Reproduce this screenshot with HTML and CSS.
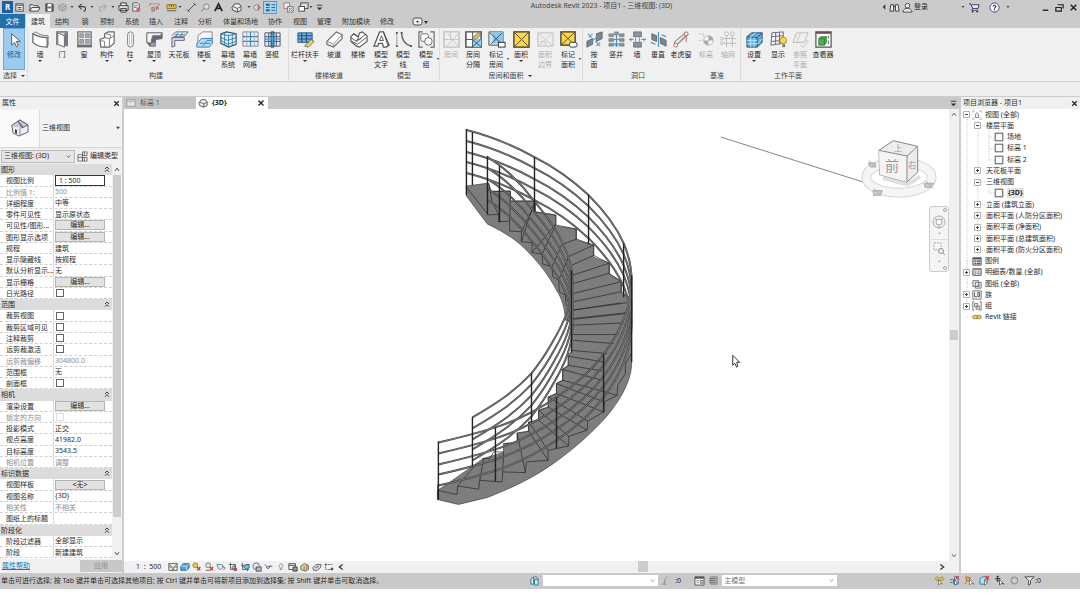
FILE: index.html
```html
<!DOCTYPE html>
<html lang="zh-CN">
<head>
<meta charset="utf-8">
<title>Autodesk Revit 2023 - 项目1 - 三维视图: (3D)</title>
<link rel="stylesheet" href="styles.css">
</head>
<body>
<svg class="defs" aria-hidden="true">
  <defs>
    <!-- ribbon icons, 20 x 20 -->
    <symbol id="r-arrow" viewBox="0 0 20 20"><path d="M7 4v12l3-3 2 4.500 2-1-2-4.500h4z" fill="#fff" stroke="#555"/></symbol>
    <symbol id="r-wall" viewBox="0 0 20 20"><path d="M2 4c5 3 9 4 15 4v10C10 18 6 17 2 13z" fill="#fff" stroke="#666" stroke-width="1.300"/><path d="M2 4l3-2c4 3 7 4 13 4v10l-1 2" fill="none" stroke="#777"/></symbol>
    <symbol id="r-door" viewBox="0 0 20 20"><path d="M4 16V2h11v15" fill="#ddd" stroke="#666" stroke-width="1.200"/><path d="M12 3h3v14h-3z" fill="#778"/><path d="M5 3l7 3v12l-7-3z" fill="#fafafa" stroke="#666"/></symbol>
    <symbol id="r-window" viewBox="0 0 20 20"><path d="M3 2h14v14H3z" fill="#eee" stroke="#777" stroke-width="1.500"/><path d="M5 4h4v4H5zM11 4h4v4h-4zM5 10h4v4H5zM11 10h4v4h-4z" fill="#a4acb6" stroke="#777" stroke-width=".7"/><path d="M2 17.500h16" stroke="#666" stroke-width="1.500"/></symbol>
    <symbol id="r-comp" viewBox="0 0 20 20"><path d="M2 10l5-2V4l4-2h6v12l-5 4H3z" fill="#fff" stroke="#666" stroke-width="1.200"/><path d="M7 8l5 1 5-3M12 9v9M2 11l5 1v6M8 4l5 1v4" fill="none" stroke="#777"/></symbol>
    <symbol id="r-col" viewBox="0 0 20 20"><rect x="7" y="2" width="6" height="16" rx="3" fill="#fff" stroke="#777"/><path d="M9 4v12M11 4v12" stroke="#aaa" stroke-width=".7"/></symbol>
    <symbol id="r-roof" viewBox="0 0 20 20"><path d="M2 3h16v6l-7 1v7H5l-3-4z" fill="#667" stroke="#666"/><path d="M2 3h16l-2 3H8L6 14l-4-1z" fill="#f4f4f4" stroke="#777"/><path d="M6 14l5-1v4H6z" fill="#99a"/></symbol>
    <symbol id="r-ceil" viewBox="0 0 20 20"><path d="M2 6l4-4h13l-4 5H4v8" fill="#e9f4fb" stroke="#666"/><path d="M5 5h11M8 3l-2 4M13 3l-2 4" stroke="#2980b9"/><path d="M2 8h13v3H5v6l-3 1z" fill="#d6dade" stroke="#667"/></symbol>
    <symbol id="r-floor" viewBox="0 0 20 20"><path d="M3 13V6l5-4h10v12" fill="#f6f6f6" stroke="#888"/><path d="M2 14l5-5h11v5l-3 4H2z" fill="#b9dcf0" stroke="#2980b9"/><path d="M5 14h5l3-3h4M8 17l3-3h5" fill="none" stroke="#2980b9"/></symbol>
    <symbol id="r-csys" viewBox="0 0 20 20"><path d="M2 4l6-2 10 2v11l-8 3-8-4z" fill="#dff0fa" stroke="#356" stroke-width="1.200"/><path d="M2 8l7 3 9-3M2 11l7 4 9-3M6 3v13M10 5v13M14 4v12M2 4l8 2 8-2" fill="none" stroke="#2478a8" stroke-width=".9"/></symbol>
    <symbol id="r-cgrid" viewBox="0 0 20 20"><path d="M2 2h16v15H2z" fill="#e8eef2" stroke="#889"/><path d="M2 7h16M2 12h16M10 2v15" stroke="#3b86b2" stroke-width="1.200"/><path d="M6 2v15M14 2v15" stroke="#9ab"/></symbol>
    <symbol id="r-mull" viewBox="0 0 20 20"><path d="M2 3h16v14H2z" fill="#e3edf3" stroke="#556"/><path d="M2 7h16M2 12h16M6 3v14M14 3v14" stroke="#457"/><path d="M8.500 2h3v16h-3z" fill="#45a1cf" stroke="#245"/><path d="M2 9.500h16" stroke="#45a1cf" stroke-width="1.500"/></symbol>
    <symbol id="r-rail" viewBox="0 0 20 20"><path d="M2 3h15v10H2z" fill="#76aed6" stroke="#245c8c"/><path d="M2 6h15M2 9.500h15M6 3v10M11 3v10" stroke="#1d5484" stroke-width="1.200"/><path d="M9 17l7-7 3 2-6 6z" fill="#f5cf62" stroke="#765"/></symbol>
    <symbol id="r-ramp" viewBox="0 0 20 20"><path d="M2 12L12 2l6 3v4l-9 9-7-3z" fill="#fff" stroke="#666" stroke-width="1.200"/><path d="M2 12l7 3 9-10M9 15v3" fill="none" stroke="#888"/></symbol>
    <symbol id="r-stair" viewBox="0 0 20 20"><path d="M2 7l3-3 5 3 1-4 3-1 5 4v6l-8 6-3-1-6-5z" fill="#fff" stroke="#555" stroke-width="1.200"/><path d="M5 4l5 4-2 3 5-2M2 8l6 4 9-7M3 12l6 3 9-7" fill="none" stroke="#555"/></symbol>
    <symbol id="r-mtext" viewBox="0 0 20 20"><path d="M2 17L8 2h4l6 14-3 2h-3l-1-4H7l-1 3z" fill="#fff" stroke="#555" stroke-width="1.300"/><path d="M8 11l2-5 2 5zM12 2l5 15" fill="none" stroke="#555"/></symbol>
    <symbol id="r-mline" viewBox="0 0 20 20"><path d="M3 3v14" stroke="#999"/><path d="M8 3c0 8 3 12 10 14" fill="none" stroke="#555" stroke-width="1.300"/><path d="M2 2h2v2H2zM2 16h2v2H2zM7 2h2v2H7zM17 16h2v2h-2z" fill="#555"/></symbol>
    <symbol id="r-mgroup" viewBox="0 0 20 20"><path d="M6 2H2v16h4M14 2h4v16h-4" fill="none" stroke="#666" stroke-width="1.200"/><rect x="4" y="4" width="8" height="8" rx="2" fill="#fff" stroke="#666"/><circle cx="12" cy="12" r="4" fill="#fff" stroke="#666"/></symbol>
    <symbol id="r-room" viewBox="0 0 20 20"><path d="M2 2h16v16H2z" fill="#eee" stroke="#666" stroke-width="1.500"/><path d="M2 10h7V2M9 10h9M5 17L17 4M6 4l12 14" stroke="#777" fill="none"/></symbol>
    <symbol id="r-rsep" viewBox="0 0 20 20"><path d="M2 2h16v16H2z" fill="#fff" stroke="#444" stroke-width="1.500"/><path d="M9 9h9v9H9z" fill="#8ed1ec"/><path d="M2 10h7V2M9 10v8M9 18l9-9M9 10l9 8" stroke="#555" fill="none"/><path d="M9 8l6-5 3 2-6 5z" fill="#e9be45" stroke="#876"/></symbol>
    <symbol id="r-rtag" viewBox="0 0 20 20"><path d="M2 2h15v14H2z" fill="#d4e5ee" stroke="#555"/><path d="M6 2h11v12H6z" fill="#8cc5e6"/><path d="M3 3l13 12M16 3L4 15" stroke="#357"/><rect x="12" y="13" width="7" height="5" fill="#fff" stroke="#333"/></symbol>
    <symbol id="r-area" viewBox="0 0 20 20"><path d="M2 2h16v16H2z" fill="#fbd54a" stroke="#333" stroke-width="1.300"/><path d="M2 2l16 16M18 2L2 18" stroke="#665022"/></symbol>
    <symbol id="r-abound" viewBox="0 0 20 20"><path d="M2 3h16v14H2z" fill="#e8e8e8" stroke="#666"/><path d="M2 3l16 14M18 3L2 17M4 12h6v5" stroke="#888" fill="none"/></symbol>
    <symbol id="r-atag" viewBox="0 0 20 20"><path d="M2 2h15v14H2z" fill="#fbd54a" stroke="#333" stroke-width="1.300"/><path d="M2 2l15 14M17 2L2 16" stroke="#665022"/><rect x="11" y="13" width="8" height="5" rx="2" fill="#fff" stroke="#333"/></symbol>
    <symbol id="r-face" viewBox="0 0 20 20"><path d="M12 4l6-2v7l-6 3z" fill="#7d8790" stroke="#666"/><path d="M2 12l6-3v6l-6 3z" fill="#7d8790" stroke="#666"/><path d="M3 4l4 4M8 4L4 8M11 12l5 5M16 13l-4 4M6 13L14 6" stroke="#5b9ec8" stroke-width="1.200"/></symbol>
    <symbol id="r-shaft" viewBox="0 0 20 20"><path d="M2 4h5v3H2zM2 9h5v3H2zM2 14h5v3H2zM13 4h5v3h-5zM13 9h5v3h-5zM13 14h5v3h-5zM8 2h4v3H8z" fill="#8c959d" stroke="#6a747c" stroke-width=".6"/><path d="M10 5v12M7 10h6M8 14l2 3 2-3" fill="none" stroke="#4493c2" stroke-width="1.300"/></symbol>
    <symbol id="r-owall" viewBox="0 0 20 20"><path d="M6 2h8v5H6zM6 13h8v5H6z" fill="#8c959d" stroke="#6a747c"/><path d="M1 10h5M14 10h5M4 8l-2 2 2 2M16 8l2 2-2 2M8 8v4M12 8v4" fill="none" stroke="#4e97bf"/></symbol>
    <symbol id="r-vert" viewBox="0 0 20 20"><path d="M3 4l5 2v6l-5-2zM12 8l6 3v6l-6-3z" fill="#7d8790" stroke="#666"/><path d="M10 2v16M2 13l5 2M13 5l5 2" stroke="#4e97bf" stroke-width="1.300"/></symbol>
    <symbol id="r-dorm" viewBox="0 0 20 20"><path d="M3 17V12L14 3l3 2L6 15z" fill="#e3e3e3" stroke="#777"/><path d="M5 16l10-11M15 5v8" stroke="#a6766a"/><circle cx="4" cy="16" r="2" fill="#fff" stroke="#a66"/><circle cx="15" cy="4" r="2" fill="#fff" stroke="#a66"/></symbol>
    <symbol id="r-level" viewBox="0 0 20 20"><circle cx="12" cy="11" r="5" fill="#fff" stroke="#555"/><path d="M12 6a5 5 0 0 1 5 5h-5zM12 16a5 5 0 0 1-5-5h5z" fill="#222"/><path d="M2 4h5v4M2 11h4" stroke="#666" fill="none" stroke-dasharray="2 1"/></symbol>
    <symbol id="r-grid" viewBox="0 0 20 20"><path d="M8 5v13M14 5v13M3 9h15M3 14h15" stroke="#555"/><circle cx="8" cy="4" r="2" fill="#fff" stroke="#555"/><circle cx="14" cy="4" r="2" fill="#fff" stroke="#555"/><circle cx="3" cy="9" r="1.500" fill="#fff" stroke="#555"/><circle cx="3" cy="14" r="1.500" fill="#fff" stroke="#555"/></symbol>
    <symbol id="r-set" viewBox="0 0 20 20"><path d="M2 7l5-4 11 0v10l-5 5H2z" fill="#5aaee0" stroke="#346"/><path d="M2 7l11 1 5-5M13 8v10" fill="none" stroke="#245c84"/><path d="M6 7v11M9.500 8v10M2 11h11M2 14.500h11l5-5M6 7l5-4" fill="none" stroke="#cdeaf9" stroke-width=".9"/></symbol>
    <symbol id="r-show" viewBox="0 0 20 20"><path d="M3 3l12-1v12L2 16z" fill="#f4f4f4" stroke="#667"/><path d="M3 7l12-1M3 12l11-1M7 3v12M11 3v12" stroke="#667"/><circle cx="15" cy="11" r="3.500" fill="#fbd54a" stroke="#b88a1c"/><path d="M14 15h3v3h-3z" fill="#777"/></symbol>
    <symbol id="r-ref" viewBox="0 0 20 20"><path d="M6 3h12l-4 10H2z" fill="#eee" stroke="#555"/><path d="M10 3L6 13M15 10l3 2-5 6-3-2" stroke="#777" fill="none"/></symbol>
    <symbol id="r-viewer" viewBox="0 0 20 20"><path d="M2 2h16v16H2z" fill="#fff" stroke="#555" stroke-width="1.300"/><path d="M2 3h16" stroke="#704a55" stroke-width="2"/><path d="M5 9l2-2h6v6l-2 3H5z" fill="#4fae53" stroke="#2c7a34" stroke-width=".8"/><path d="M5 9h6v7M11 9l2-2" fill="none" stroke="#2c7a34" stroke-width=".8"/><path d="M15 6v3M15 11v4" stroke="#456"/></symbol>

    <!-- small toolbar icons, 12 x 12 -->
    <symbol id="s-doc" viewBox="0 0 12 12"><rect x="2" y="2" width="8" height="8" fill="#eee" stroke="#444"/><path d="M2 3.500h8M4 6h4M4 8h4" stroke="#444"/></symbol>
    <symbol id="s-open" viewBox="0 0 12 12"><path d="M1 10V3h3l1 1h5v2M1 10l2-4h9l-2 4z" fill="#eee" stroke="#444"/></symbol>
    <symbol id="s-save" viewBox="0 0 12 12"><path d="M2 2h7l1 1v7H2z" fill="#777" stroke="#333"/><path d="M4 2h4v3H4zM4 7h4v3H4z" fill="#fff"/></symbol>
    <symbol id="s-sync" viewBox="0 0 12 12"><path d="M2 4l4-2 4 2v4l-4 2-4-2zM2 4l4 2 4-2M6 6v4" fill="#bbb" stroke="#999"/></symbol>
    <symbol id="s-undo" viewBox="0 0 12 12"><path d="M5 2L2 5l3 3M2 5h5c3 0 3 5 0 5" fill="none" stroke="#444" stroke-width="1.200"/></symbol>
    <symbol id="s-redo" viewBox="0 0 12 12"><path d="M7 2l3 3-3 3M10 5H5c-3 0-3 5 0 5" fill="none" stroke="#aaa" stroke-width="1.200"/></symbol>
    <symbol id="s-print" viewBox="0 0 12 12"><path d="M3 4V1h6v3M1 9V4h10v5zM3 7h6v4H3z" fill="#eee" stroke="#333"/></symbol>
    <symbol id="s-pdf" viewBox="0 0 12 12"><path d="M2 1h5l2 2v7H2z" fill="#eee" stroke="#555"/><path d="M3 4h4M3 6h3" stroke="#38a"/><path d="M6 6h4v4H6z" fill="#c66"/></symbol>
    <symbol id="s-cut" viewBox="0 0 12 12"><path d="M1 2h10M1 2v3M11 2v3" stroke="#a66" stroke-dasharray="2 1"/><path d="M3 6h3v4H3zM8 5h2v3H8z" fill="#c98" stroke="#855" stroke-width=".6"/></symbol>
    <symbol id="s-rule" viewBox="0 0 12 12"><path d="M1 3h10v4H1z" fill="#f2c14e" stroke="#8a6a1d"/><path d="M1 9.500h10M4 3v2M6 3v2M8 3v2" stroke="#555"/></symbol>
    <symbol id="s-dim" viewBox="0 0 12 12"><path d="M2 10l8-8M1 8l3 3M8 1l3 3" stroke="#444"/></symbol>
    <symbol id="s-tag" viewBox="0 0 12 12"><path d="M1 10l4-3" stroke="#777"/><circle cx="7" cy="5" r="3" fill="#ddd" stroke="#777"/></symbol>
    <symbol id="s-text" viewBox="0 0 12 12"><path d="M2 10l4-8 4 8M4 7h4" fill="none" stroke="#222" stroke-width="1.800"/></symbol>
    <symbol id="s-cube" viewBox="0 0 12 12"><path d="M1 6l3-4h5l2 3v4l-4 2-5-2z" fill="#eee" stroke="#444"/><path d="M2 5l5 2 4-2M7 7v4" fill="none" stroke="#555"/></symbol>
    <symbol id="s-sect" viewBox="0 0 12 12"><circle cx="5" cy="6" r="3" fill="#ddd" stroke="#888"/><path d="M6 2l4 4-4 4z" fill="#b77"/></symbol>
    <symbol id="s-thin" viewBox="0 0 12 12"><path d="M1 2h4v2H1zM1 8h4v2H1z" fill="#245c84"/><path d="M7 3h4M7 6h4M7 9h4M1 6h4" stroke="#245c84"/></symbol>
    <symbol id="s-close" viewBox="0 0 12 12"><rect x="1" y="1" width="6" height="6" fill="#eee" stroke="#a77"/><rect x="5" y="5" width="6" height="6" fill="#eee" stroke="#777"/><path d="M6 6l4 4M10 6l-4 4" stroke="#b55"/></symbol>
    <symbol id="s-win" viewBox="0 0 12 12"><rect x="3" y="1" width="8" height="6" fill="#ddd" stroke="#444"/><rect x="1" y="5" width="6" height="5" fill="#fff" stroke="#444"/></symbol>
    <symbol id="s-cust" viewBox="0 0 12 12"><path d="M3 3.500h6" stroke="#333"/><path d="M3 6h6L6 9z" fill="#333"/></symbol>
    <symbol id="s-caret" viewBox="0 0 12 12"><path d="M3 4h6L6 8z" fill="#444"/></symbol>
    <symbol id="s-tri" viewBox="0 0 12 12"><path d="M8 2v8L4 6z" fill="#333"/></symbol>
    <symbol id="s-bino" viewBox="0 0 12 12"><path d="M1 10l1-7h3v7zM7 10V3h3l1 7zM5 5h2" fill="#eee" stroke="#333"/></symbol>
    <symbol id="s-user" viewBox="0 0 12 12"><circle cx="6" cy="4" r="2.500" fill="#eee" stroke="#444"/><path d="M1 11c0-3 3-4 5-4s5 1 5 4z" fill="#eee" stroke="#444"/></symbol>
    <symbol id="s-cart" viewBox="0 0 12 12"><path d="M0 2h2l2 5h6l1-4H3M4 7l-1 2h7" fill="#eef" stroke="#335"/><circle cx="4" cy="10.500" r="1" fill="#335"/><circle cx="9" cy="10.500" r="1" fill="#335"/></symbol>
    <symbol id="s-help" viewBox="0 0 12 12"><circle cx="6" cy="6" r="5" fill="#fff" stroke="#346"/><path d="M4.500 5c0-2 3-2 3 0 0 1-1.500 1-1.500 2.300M6 8v1.200" fill="none" stroke="#236" stroke-width="1.200"/></symbol>
    <symbol id="s-min" viewBox="0 0 12 12"><path d="M3 9h6" stroke="#222" stroke-width="1.500"/></symbol>
    <symbol id="s-rest" viewBox="0 0 12 12"><path d="M4 3h6v4M2 6h6v4H2z" fill="none" stroke="#222" stroke-width="1.300"/></symbol>
    <symbol id="s-x" viewBox="0 0 12 12"><path d="M3 3l6 6M9 3L3 9" stroke="#222" stroke-width="1.600"/></symbol>
    <symbol id="s-house" viewBox="0 0 20 20"><path d="M2 8l8-6 8 5v7l-9 4-6-3z" fill="#eceef1" stroke="#667"/><path d="M1 8l7-5 5 6-1 1M8 3l2-1 8 5-6 3z" fill="#c3c8d0" stroke="#667"/><path d="M10 10v8" stroke="#889"/><path d="M5 11l2 1v4l-2-1z" fill="#445"/></symbol>
    <symbol id="s-type" viewBox="0 0 12 12"><path d="M1 4h5v7H1zM6 1h5v4H6zM6 7h5v4H6zM1 7h5M8 1v4M8 7v4" fill="#eee" stroke="#555" stroke-width=".8"/></symbol>
    <symbol id="s-plan" viewBox="0 0 12 12"><path d="M1 2h10v8H1z" fill="#e4e4e4" stroke="#888" stroke-width=".8"/><path d="M1 4h10M5 4v2" stroke="#aaa"/></symbol>
    <symbol id="s-down" viewBox="0 0 12 12"><path d="M3 4l3 4 3-4" fill="none" stroke="#444" stroke-width="1.500"/></symbol>
    <symbol id="s-up" viewBox="0 0 12 12"><path d="M3 8l3-4 3 4" fill="none" stroke="#444" stroke-width="1.500"/></symbol>
    <symbol id="s-right" viewBox="0 0 12 12"><path d="M4 3l4 3-4 3" fill="none" stroke="#333" stroke-width="1.500"/></symbol>
    <symbol id="s-left" viewBox="0 0 12 12"><path d="M8 3L4 6l4 3" fill="none" stroke="#333" stroke-width="1.500"/></symbol>
    <symbol id="s-fold" viewBox="0 0 12 12"><path d="M3 6l3-3 3 3M3 10l3-3 3 3" fill="none" stroke="#333" stroke-width="1.400"/></symbol>
    <!-- view control bar -->
    <symbol id="v-det" viewBox="0 0 12 12"><path d="M1 2h10v8H1z" fill="#fff" stroke="#444"/><path d="M1 2l4 4H1M11 2L7 6h4M5 6v3h2V6" fill="none" stroke="#555"/></symbol>
    <symbol id="v-vis" viewBox="0 0 12 12"><path d="M1 5l3-3h7v5l-3 3H1z" fill="#4ea3d4" stroke="#1e6693"/><path d="M1 5h7v5M8 5l3-3" fill="none" stroke="#d5eefa"/></symbol>
    <symbol id="v-sun" viewBox="0 0 12 12"><circle cx="4" cy="4" r="3" fill="#f3c24b" stroke="#a8812a"/><path d="M6 6l4 4M10 6l-4 4" stroke="#c33" stroke-width="1.500"/></symbol>
    <symbol id="v-shadow" viewBox="0 0 12 12"><circle cx="5" cy="4" r="3" fill="#ddd" stroke="#777"/><path d="M2 10h5" stroke="#555"/><path d="M7 6l4 4M11 6l-4 4" stroke="#c33" stroke-width="1.500"/></symbol>
    <symbol id="v-rend" viewBox="0 0 12 12"><path d="M1 3h6l2 3-3 3-3-1zM7 5l4 2-2 3" fill="#e6edf2" stroke="#678"/></symbol>
    <symbol id="v-crop" viewBox="0 0 12 12"><path d="M3 1v8h8M1 3h8v8M5 6l3-2v4H5z" fill="none" stroke="#456"/><path d="M7 7l4 4M11 7l-4 4" stroke="#b44"/></symbol>
    <symbol id="v-crop2" viewBox="0 0 12 12"><path d="M3 1v8h8M1 4h8v7" fill="none" stroke="#456"/><path d="M4 6l3-3h4v4L8 9z" fill="#79b8dc" stroke="#357"/></symbol>
    <symbol id="v-lock" viewBox="0 0 12 12"><circle cx="5" cy="5" r="4" fill="#e2e6e9" stroke="#567"/><rect x="5" y="6" width="6" height="5" fill="#bbb" stroke="#445"/></symbol>
    <symbol id="v-glass" viewBox="0 0 12 12"><path d="M1 3l3 3 3-1 3 0M3 6c1 3 4 2 4-1" fill="none" stroke="#345"/></symbol>
    <symbol id="v-bulb" viewBox="0 0 12 12"><path d="M6 2c-3 1-2 4-1 5v2h2V7c1-1 2-4-1-5z" fill="#eee" stroke="#789"/></symbol>
    <symbol id="v-temp" viewBox="0 0 12 12"><path d="M1 2h8v7H1zM1 4h8" fill="#eee" stroke="#444"/><path d="M6 6h5v5H6z" fill="#999" stroke="#333"/></symbol>
    <symbol id="v-ana" viewBox="0 0 12 12"><path d="M1 5l4-3 5 2v5l-4 2-5-2z" fill="#e5d79a" stroke="#555"/><path d="M5 5v5M8 4v5" stroke="#954"/></symbol>
    <symbol id="v-disp" viewBox="0 0 12 12"><path d="M1 7l4-4 6 0-1 4-4 3H2z" fill="#ddd" stroke="#555"/><path d="M4 7l4-2" stroke="#444"/></symbol>
    <symbol id="v-con" viewBox="0 0 12 12"><path d="M2 3h8M2 3v6h7" fill="none" stroke="#555" stroke-dasharray="2 1"/><path d="M8 7h3v3H8zM1 2h2v2H1z" fill="#555"/></symbol>
    <!-- status bar -->
    <symbol id="t-work" viewBox="0 0 12 12"><path d="M2 4l3-2v8H2zM6 5h4v6H6z" fill="#cfe5ea" stroke="#2b7d8d"/><path d="M6 2c3 0 4 1 4 3" fill="none" stroke="#2b7d8d"/></symbol>
    <symbol id="t-pen" viewBox="0 0 12 12"><path d="M2 10c3 0 1-7 5-8M2 10h4" fill="none" stroke="#888"/></symbol>
    <symbol id="t-opt" viewBox="0 0 12 12"><path d="M1 2h10v9H1z" fill="#eee" stroke="#555"/><path d="M1 3h10" stroke="#555" stroke-width="2"/><path d="M3 6h2M3 8h2M7 6h3v3H7z" stroke="#777" fill="#ccc"/></symbol>
    <symbol id="t-list" viewBox="0 0 12 12"><path d="M3 2h7v8H3z" fill="#aaa" stroke="#888"/><path d="M1 4h7M1 6h7M1 8h7" stroke="#777"/></symbol>
    <symbol id="t-sel" viewBox="0 0 12 12"><path d="M1 4l3-2 2 2 3-2 2 2-2 2H3z" fill="#e8bb48" stroke="#967322" stroke-width=".7"/><path d="M5 5v6l2-2 2 1z" fill="#fff" stroke="#555" stroke-width=".7"/></symbol>
    <symbol id="t-under" viewBox="0 0 12 12"><path d="M1 5h4v5M1 8h3M6 2h4v8H6z" fill="none" stroke="#357ba3"/><path d="M7 1l4 4M11 1L7 5" stroke="#c33"/><path d="M6 5v6l3-2z" fill="#fff" stroke="#444" stroke-width=".7"/></symbol>
    <symbol id="t-pin" viewBox="0 0 12 12"><path d="M2 2l5 1-1 4-3-1zM3 6l-2 4" fill="#ecaa60" stroke="#ae6b27"/><path d="M6 5v6l2-2 3 1z" fill="#fff" stroke="#555" stroke-width=".7"/></symbol>
    <symbol id="t-face" viewBox="0 0 12 12"><path d="M1 4l3-2h5v6l-3 2H1z" fill="#b5dcef" stroke="#2b7fab"/><path d="M7 1l4 4M11 1L7 5" stroke="#c33" stroke-width="1.300"/><path d="M6 5v6l3-2z" fill="#fff" stroke="#444" stroke-width=".7"/></symbol>
    <symbol id="t-drag" viewBox="0 0 12 12"><path d="M4 1v6M1 4h6M3 2l1-1 1 1M3 6l1 1 1-1" stroke="#222" fill="none"/><path d="M6 5v6l2-2 3 1z" fill="#fff" stroke="#333" stroke-width=".8"/></symbol>
    <symbol id="t-ring" viewBox="0 0 12 12"><circle cx="6" cy="6" r="3.500" fill="#ccc" stroke="#999" stroke-width="1.500"/></symbol>
    <symbol id="t-filter" viewBox="0 0 12 12"><path d="M1 2h10L7 6v4l-2 1V6z" fill="#eee" stroke="#444"/></symbol>
    <!-- browser tree -->
    <symbol id="b-root" viewBox="0 0 12 12"><path d="M1 3V1h2M9 1h2v2M11 9v2H9M3 11H1V9" fill="none" stroke="#999"/><path d="M4 5l2-2 2 2v4H4z" fill="#eee" stroke="#777"/></symbol>
    <symbol id="b-view" viewBox="0 0 12 12"><rect x="1.500" y="1.500" width="9" height="9" fill="#fafafa" stroke="#777" stroke-width="1.500"/></symbol>
    <symbol id="b-legend" viewBox="0 0 12 12"><path d="M1 2h10v9H1z" fill="#ccc" stroke="#555"/><path d="M1 3h10M3 6h2M3 9h2M6 6h4M6 9h4" stroke="#555" stroke-width="1.500"/></symbol>
    <symbol id="b-sched" viewBox="0 0 12 12"><path d="M1 2h10v8H1z" fill="#fff" stroke="#444"/><path d="M1 3h10" stroke="#a88" stroke-width="2"/><path d="M1 6h10M1 8h10M4 4v6M8 4v6" stroke="#777" stroke-width=".7"/></symbol>
    <symbol id="b-sheet" viewBox="0 0 12 12"><path d="M1 2h7v7H1zM4 4h7v7H4z" fill="#eee" stroke="#666"/><path d="M6 8h4M8 6v4" stroke="#777"/></symbol>
    <symbol id="b-fam" viewBox="0 0 12 12"><path d="M1 1h10v10H1z" fill="#f4f4f4" stroke="#666"/><path d="M3 3v5h3M7 3h2v5H7z" fill="none" stroke="#444"/></symbol>
    <symbol id="b-grp" viewBox="0 0 12 12"><path d="M3 1H1v10h2M9 1h2v10H9" fill="none" stroke="#666"/><path d="M3 3h4v4H3zM5 6h4v4H5z" fill="#ddd" stroke="#777"/></symbol>
    <symbol id="b-link" viewBox="0 0 12 12"><rect x="1" y="4" width="6" height="4" rx="2" fill="#f1cf73" stroke="#94701d"/><rect x="6" y="4" width="5" height="4" rx="2" fill="#f1cf73" stroke="#94701d"/></symbol>
    <symbol id="b-plus" viewBox="0 0 7 7"><path d="M.5.5h6v6h-6z" fill="#fff" stroke="#b0b0b0"/><path d="M2 3.500h3M3.500 2v3" stroke="#444"/></symbol>
    <symbol id="b-minus" viewBox="0 0 7 7"><path d="M.5.5h6v6h-6z" fill="#fff" stroke="#b0b0b0"/><path d="M2 3.500h3" stroke="#444"/></symbol>
  </defs>
</svg>

<header class="titlebar">
  <nav class="quick" aria-label="快速访问工具栏">
    <button class="logo" aria-label="Revit">R</button>
    <button class="w13" aria-label="主页"><svg><use href="#s-doc"/></svg></button>
    <button class="w17" aria-label="打开"><svg><use href="#s-open"/></svg></button>
    <button class="w12" aria-label="保存"><svg><use href="#s-save"/></svg></button>
    <button class="w14" aria-label="同步"><svg><use href="#s-sync"/></svg></button>
    <button class="w6" aria-label="同步选项"><svg><use href="#s-caret"/></svg></button>
    <button class="w14" aria-label="放弃"><svg><use href="#s-undo"/></svg></button>
    <button class="w6" aria-label="放弃列表"><svg><use href="#s-caret"/></svg></button>
    <button class="w14" aria-label="重做"><svg><use href="#s-redo"/></svg></button>
    <button class="w8 small" aria-label="重做列表"><svg><use href="#s-caret"/></svg></button>
    <button class="w12" aria-label="打印"><svg><use href="#s-print"/></svg></button>
    <button class="w14" aria-label="导出"><svg><use href="#s-pdf"/></svg></button>
    <button class="w22" aria-label="活动控件"><svg><use href="#s-cut"/></svg></button>
    <button class="w12" aria-label="测量"><svg><use href="#s-rule"/></svg></button>
    <button class="w6" aria-label="测量选项"><svg><use href="#s-caret"/></svg></button>
    <button class="w16" aria-label="对齐尺寸标注"><svg><use href="#s-dim"/></svg></button>
    <button class="w12" aria-label="标记"><svg><use href="#s-tag"/></svg></button>
    <button class="w14" aria-label="文字"><svg><use href="#s-text"/></svg></button>
    <button class="w22" aria-label="默认三维视图"><svg><use href="#s-cube"/></svg></button>
    <button class="w4" aria-label="三维选项"><svg><use href="#s-caret"/></svg></button>
    <button class="w12" aria-label="剖面"><svg><use href="#s-sect"/></svg></button>
    <button class="w14 on" aria-label="细线"><svg><use href="#s-thin"/></svg></button>
    <button class="w22" aria-label="关闭非活动视图"><svg><use href="#s-close"/></svg></button>
    <button class="w8" aria-label="切换窗口"><svg><use href="#s-win"/></svg></button>
    <button class="w8 small" aria-label="窗口列表"><svg><use href="#s-caret"/></svg></button>
    <button class="w8" aria-label="自定义"><svg><use href="#s-cust"/></svg></button>
  </nav>
  <h1 class="caption">Autodesk Revit 2023 - 项目1 - 三维视图: (3D)</h1>
  <div class="account">
    <button class="w8" aria-label="收起"><svg><use href="#s-tri"/></svg></button>
    <button class="w12" aria-label="搜索"><svg><use href="#s-bino"/></svg></button>
    <button class="w14" aria-label="用户"><svg><use href="#s-user"/></svg></button>
    <button class="login">登录</button>
    <button class="w6" aria-label="用户菜单"><svg><use href="#s-caret"/></svg></button>
    <button class="w17" aria-label="应用商店"><svg><use href="#s-cart"/></svg></button>
    <button class="w22" aria-label="帮助"><svg><use href="#s-help"/></svg></button>
    <button class="w6 last" aria-label="帮助菜单"><svg><use href="#s-caret"/></svg></button>
    <button class="w14" aria-label="最小化"><svg><use href="#s-min"/></svg></button>
    <button class="w14" aria-label="还原"><svg><use href="#s-rest"/></svg></button>
    <button class="w14" aria-label="关闭"><svg><use href="#s-x"/></svg></button>
  </div>
</header>

<nav class="tabs" aria-label="功能区选项卡">
  <button class="tab file">文件</button><button class="tab current">建筑</button><button class="tab">结构</button><button class="tab">钢</button><button class="tab">预制</button><button class="tab">系统</button><button class="tab">插入</button><button class="tab">注释</button><button class="tab">分析</button><button class="tab">体量和场地</button><button class="tab">协作</button><button class="tab">视图</button><button class="tab">管理</button><button class="tab">附加模块</button><button class="tab">修改</button>
  <button class="state" aria-label="功能区状态"><svg viewBox="0 0 16 12"><rect x="1" y="2" width="9" height="7" rx="2" fill="#eee" stroke="#555"/><path d="M4 5h3L5.500 7zM12 5h4l-2 3z" fill="#333"/></svg></button>
</nav>

<section class="ribbon" aria-label="建筑">
  <div class="group select">
    <div class="tools"><button class="tool active"><svg><use href="#r-arrow"/></svg>修改</button></div>
    <button class="name more">选择</button>
  </div>
  <div class="group build">
    <div class="tools">
      <button class="tool drop"><svg><use href="#r-wall"/></svg>墙</button>
      <button class="tool"><svg><use href="#r-door"/></svg>门</button>
      <button class="tool"><svg><use href="#r-window"/></svg>窗</button>
      <button class="tool mid drop"><svg><use href="#r-comp"/></svg>构件</button>
      <button class="tool drop"><svg><use href="#r-col"/></svg>柱</button>
      <button class="tool wide drop"><svg><use href="#r-roof"/></svg>屋顶</button>
      <button class="tool mid"><svg><use href="#r-ceil"/></svg>天花板</button>
      <button class="tool wide drop"><svg><use href="#r-floor"/></svg>楼板</button>
      <button class="tool"><svg><use href="#r-csys"/></svg>幕墙<br>系统</button>
      <button class="tool"><svg><use href="#r-cgrid"/></svg>幕墙<br>网格</button>
      <button class="tool"><svg><use href="#r-mull"/></svg>竖梃</button>
    </div>
    <div class="name">构建</div>
  </div>
  <div class="group">
    <div class="tools">
      <button class="tool widest drop"><svg><use href="#r-rail"/></svg>栏杆扶手</button>
      <button class="tool wide"><svg><use href="#r-ramp"/></svg>坡道</button>
      <button class="tool"><svg><use href="#r-stair"/></svg>楼梯</button>
    </div>
    <div class="name">楼梯坡道</div>
  </div>
  <div class="group">
    <div class="tools">
      <button class="tool"><svg><use href="#r-mtext"/></svg>模型<br>文字</button>
      <button class="tool"><svg><use href="#r-mline"/></svg>模型<br>线</button>
      <button class="tool mid side"><svg><use href="#r-mgroup"/></svg>模型<br>组</button>
    </div>
    <div class="name">模型</div>
  </div>
  <div class="group ruled">
    <div class="tools">
      <button class="tool" disabled><svg><use href="#r-room"/></svg>房间</button>
      <button class="tool"><svg><use href="#r-rsep"/></svg>房间<br>分隔</button>
      <button class="tool mid side"><svg><use href="#r-rtag"/></svg>标记<br>房间</button>
      <button class="tool wide drop"><svg><use href="#r-area"/></svg>面积</button>
      <button class="tool" disabled><svg><use href="#r-abound"/></svg>面积<br>边界</button>
      <button class="tool mid side"><svg><use href="#r-atag"/></svg>标记<br>面积</button>
    </div>
    <button class="name more">房间和面积</button>
  </div>
  <div class="group ruled">
    <div class="tools">
      <button class="tool"><svg><use href="#r-face"/></svg>按<br>面</button>
      <button class="tool"><svg><use href="#r-shaft"/></svg>竖井</button>
      <button class="tool slim"><svg><use href="#r-owall"/></svg>墙</button>
      <button class="tool"><svg><use href="#r-vert"/></svg>垂直</button>
      <button class="tool mid"><svg><use href="#r-dorm"/></svg>老虎窗</button>
    </div>
    <div class="name">洞口</div>
  </div>
  <div class="group">
    <div class="tools">
      <button class="tool" disabled><svg><use href="#r-level"/></svg>标高</button>
      <button class="tool" disabled><svg><use href="#r-grid"/></svg>轴网</button>
    </div>
    <div class="name">基准</div>
  </div>
  <div class="group ruled">
    <div class="tools">
      <button class="tool wide drop"><svg><use href="#r-set"/></svg>设置</button>
      <button class="tool"><svg><use href="#r-show"/></svg>显示</button>
      <button class="tool" disabled><svg><use href="#r-ref"/></svg>参照<br>平面</button>
      <button class="tool mid"><svg><use href="#r-viewer"/></svg>查看器</button>
    </div>
    <div class="name">工作平面</div>
  </div>
</section>
<div class="optionbar"></div>

<main class="work">
  <aside class="props">
    <div class="panelhead"><h2>属性</h2><button aria-label="关闭属性"><svg><use href="#s-x"/></svg></button></div>
    <div class="family">
      <span class="thumb"><svg><use href="#s-house"/></svg></span>
      <span class="fname">三维视图</span>
      <button aria-label="选择类型"><svg><use href="#s-caret"/></svg></button>
    </div>
    <div class="typerow">
      <span class="pick"><select aria-label="视图实例"><option>三维视图: (3D)</option></select><svg><use href="#s-down"/></svg></span>
      <button class="edittype"><svg><use href="#s-type"/></svg>编辑类型</button>
    </div>
    <div class="listwrap">
      <table class="grid">
        <tbody>
        <tr class="sec"><th colspan="2">图形</th><td><svg><use href="#s-fold"/></svg></td></tr>
        <tr><th><label for="scale">视图比例</label></th><td><input id="scale" type="text" value="1 : 500"></td></tr>
        <tr class="off"><th>比例值 1:</th><td>500</td></tr>
        <tr><th>详细程度</th><td>中等</td></tr>
        <tr><th>零件可见性</th><td>显示原状态</td></tr>
        <tr><th>可见性/图形...</th><td><button>编辑...</button></td></tr>
        <tr><th>图形显示选项</th><td><button>编辑...</button></td></tr>
        <tr><th>规程</th><td>建筑</td></tr>
        <tr><th>显示隐藏线</th><td>按规程</td></tr>
        <tr><th>默认分析显示...</th><td>无</td></tr>
        <tr><th>显示栅格</th><td><button>编辑...</button></td></tr>
        <tr><th><label for="sun">日光路径</label></th><td><input id="sun" type="checkbox"></td></tr>
        <tr class="sec"><th colspan="2">范围</th><td><svg><use href="#s-fold"/></svg></td></tr>
        <tr><th><label for="crop">裁剪视图</label></th><td><input id="crop" type="checkbox"></td></tr>
        <tr><th><label for="cropvis">裁剪区域可见</label></th><td><input id="cropvis" type="checkbox"></td></tr>
        <tr><th><label for="anno">注释裁剪</label></th><td><input id="anno" type="checkbox"></td></tr>
        <tr><th><label for="far">远剪裁激活</label></th><td><input id="far" type="checkbox"></td></tr>
        <tr class="off"><th>远剪裁偏移</th><td>304800.0</td></tr>
        <tr><th>范围框</th><td>无</td></tr>
        <tr><th><label for="sbox">剖面框</label></th><td><input id="sbox" type="checkbox"></td></tr>
        <tr class="sec"><th colspan="2">相机</th><td><svg><use href="#s-fold"/></svg></td></tr>
        <tr><th>渲染设置</th><td><button>编辑...</button></td></tr>
        <tr class="off"><th><label for="lock">锁定的方向</label></th><td><input id="lock" type="checkbox" disabled></td></tr>
        <tr><th>投影模式</th><td>正交</td></tr>
        <tr><th>视点高度</th><td>41982.0</td></tr>
        <tr><th>目标高度</th><td>3543.5</td></tr>
        <tr class="off"><th>相机位置</th><td>调整</td></tr>
        <tr class="sec"><th colspan="2">标识数据</th><td><svg><use href="#s-fold"/></svg></td></tr>
        <tr><th>视图样板</th><td><button>&lt;无&gt;</button></td></tr>
        <tr><th>视图名称</th><td>{3D}</td></tr>
        <tr class="off"><th>相关性</th><td>不相关</td></tr>
        <tr><th>图纸上的标题</th><td></td></tr>
        <tr class="sec"><th colspan="2">阶段化</th><td><svg><use href="#s-fold"/></svg></td></tr>
        <tr><th>阶段过滤器</th><td>全部显示</td></tr>
        <tr><th>阶段</th><td>新建建筑</td></tr>
        </tbody>
      </table>
      <div class="vbar"><svg><use href="#s-up"/></svg><i class="long"></i><b></b><svg><use href="#s-down"/></svg></div>
    </div>
    <div class="propfoot"><a href="#help">属性帮助</a><button disabled>应用</button></div>
  </aside>

  <section class="center">
    <div class="viewtabs">
      <button class="vtab"><svg><use href="#s-plan"/></svg>标高 1</button>
      <button class="vtab front"><svg><use href="#s-cube"/></svg><strong>{3D}</strong><svg class="end"><use href="#s-x"/></svg></button>
      <button class="tablist" aria-label="视图列表"><svg><use href="#s-cust"/></svg></button>
    </div>
    <div class="viewport">
      <div class="canvas">
        <svg class="model" viewBox="124 109 824 451" role="img" aria-label="螺旋楼梯">
          <defs>
            <path id="outer" d="M466 130C490 136 512 145 534 157C556 168 572 180 588 195C602 209 615 225 623 243C628 255 631 265 631 280C631 305 620 332 603 354C590 371 574 385 556 397C538 409 517 420 495 427C476 433 456 438 438 442"/>
            <path id="inner" d="M487 157C501 165 519 181 533 200C543 212 555 227 562 243C568 255 572 268 572 282C572 303 564 321 553 340C547 351 539 363 531 373C514 391 498 402 472 417"/>
          </defs>
          <path class="solid" d="M466 186L488 183L491 191L510 191V201L535 201V212L555 215V226L576 229V240L593 245V257L609 263V274L621 281V293L631 298V366C629 384 619 400 607 415C592 432 573 449 553 463C532 478 510 488 487 497L458 504L437 499V490L449 482L483 458L503 452V443H517V433L528 431V422L538 420V410L548 407V397L556 393V383L562 380V369L568 365V355L571 352V322L565 320C564 306 561 298 556 290C549 276 538 262 524 248C512 237 500 230 487 224L466 196Z"/>
          <g class="edge" transform="translate(420 110) scale(.333)">
            <path d="M137 230L200 310M200 315L235 313V335L268 333V363L303 365V395L335 398V427L365 433L367 462L395 470L397 500L415 510L417 545L435 555L437 585L452 592"/>
            <path d="M205 220L215 275L235 313M270 243L268 333M215 245L270 243M270 273L343 273L303 395M343 305L407 315V342L335 427M345 280L303 365M407 345L467 357V388L425 403M467 387L520 405V436L455 465M520 405L445 440M520 436L566 460V490L460 520M566 460L458 495M566 490L602 515V545L460 575M602 515L460 550M603 545L622 560M460 600L620 578M458 628L620 610"/>
            <path d="M407 342L365 433M425 403L395 470M445 440L415 510"/>
          </g>
          <g class="edge" transform="translate(420 300) scale(.333)">
            <path d="M455 30L600 8M457 55L615 38M457 75L610 68M457 103L595 103M457 120L580 130M450 150L560 160M443 168L550 185M443 195L545 212M427 208L545 240M427 240L590 285M408 250L552 305M408 280L550 335M383 290L502 362M383 320L500 390M355 330L445 408M355 360L445 437M325 365L383 450M325 393L383 480M290 398L315 517M250 455L247 515M190 475L178 540M112 557L160 500"/>
            <path d="M52 570L110 583L112 557L175 567L178 540L245 545L247 515L315 517L318 485L383 480V450L445 437V408L500 390L502 362L550 335L552 305L590 285L592 255L615 220V190L632 160"/>
            <path d="M52 552V598M185 475H208M208 475L220 455H250M253 430L290 425V398L325 393V365L355 360V330L383 320V290L408 280V250L427 240V208L443 195V165L452 155"/>
          </g>
          <g class="railing">
            <use href="#inner"/><use href="#inner" y="11"/><use href="#inner" y="22"/><use href="#inner" y="32"/><use href="#inner" y="43"/>
            <use href="#outer"/><use href="#outer" y="11"/><use href="#outer" y="22"/><use href="#outer" y="32"/><use href="#outer" y="43"/>
          </g>
          <g class="shine">
            <use href="#inner"/><use href="#inner" y="11"/><use href="#inner" y="22"/><use href="#inner" y="32"/><use href="#inner" y="43"/>
            <use href="#outer"/><use href="#outer" y="11"/><use href="#outer" y="22"/><use href="#outer" y="32"/><use href="#outer" y="43"/>
          </g>
          <path class="posts" d="M466 129V195M472 132V185M534 157V211M588 195V244M623 243V297M603 354V412M556 397V448M495 427V481M438 441V499M487 156V214M499 166V222M531 373V421M472 417V466M571 270V352M631 275V362"/>
          <path d="M720 137L872 185" stroke="#666" stroke-width=".8"/>
          <path d="M732 355v10l2-2 2 4 1-1-1-4h3z" fill="#fff" stroke="#222" stroke-width=".9"/>
        </svg>
        <svg class="viewcube" viewBox="60 130 231 186" role="img" aria-label="ViewCube">
          <ellipse cx="174" cy="248" rx="98" ry="46" fill="none" stroke="#d0d0d0" stroke-width="29"/>
          <ellipse cx="174" cy="248" rx="98" ry="46" fill="none" stroke="#f5f5f5" stroke-width="24"/>
          <path d="M128 242l70 22 36-24 6 10-38 26-78-20z" fill="#ccc" opacity=".6"/>
          <path d="M114 167l43-29 73 17v78l-32 29-82-22z" fill="#ececec" stroke="#888" stroke-width="3"/>
          <path d="M114 167l84 17v78l-82-22z" fill="#f4f4f4"/>
          <path d="M114 167l84 17 32-29M198 184v78" fill="none" stroke="#888" stroke-width="3"/>
          <g fill="#999"><text x="132" y="228" font-size="42">前</text><text x="202" y="220" font-size="24">右</text><text x="160" y="170" font-size="24">上</text></g>
          <g stroke="#aaa" stroke-width="3" fill="#ccc"><path d="M82 205h22v12H88zM84 198l18 20M96 288h28l-6 14h-20zM98 282l22 20M250 266h28l-10 12h-16zM256 260l20 22"/></g>
        </svg>
        <div class="navbar">
          <i class="dot"></i>
          <button aria-label="控制盘"><svg viewBox="0 0 14 14"><circle cx="7" cy="7" r="6" fill="#eef1f3" stroke="#aab2b6"/><circle cx="7" cy="7" r="3" fill="#fff" stroke="#9aa"/><path d="M3 4l2 1M11 4l-2 1M5 12h4" stroke="#aab"/></svg></button>
          <svg class="tiny"><use href="#s-caret"/></svg>
          <hr>
          <button aria-label="区域放大"><svg viewBox="0 0 14 14"><path d="M2 1h7v7H2z" fill="#f8f8f8" stroke="#aaa" stroke-dasharray="2 1"/><circle cx="9" cy="9" r="2.500" fill="#eee" stroke="#899"/><path d="M11 11l2 2" stroke="#899"/></svg></button>
          <svg class="tiny"><use href="#s-caret"/></svg>
          <i class="dot"></i>
        </div>
      </div>
      <div class="vbar plain"><svg><use href="#s-up"/></svg><b></b><i class="stub"></i><b></b><svg><use href="#s-down"/></svg></div>
    </div>
    <div class="viewctl">
      <button class="scale">1&nbsp; : &nbsp;500</button>
      <button aria-label="详细程度"><svg><use href="#v-det"/></svg></button>
      <button aria-label="视觉样式"><svg><use href="#v-vis"/></svg></button>
      <button aria-label="日光路径"><svg><use href="#v-sun"/></svg></button>
      <button aria-label="阴影"><svg><use href="#v-shadow"/></svg></button>
      <button aria-label="渲染"><svg><use href="#v-rend"/></svg></button>
      <button aria-label="裁剪视图"><svg><use href="#v-crop"/></svg></button>
      <button aria-label="显示裁剪区域"><svg><use href="#v-crop2"/></svg></button>
      <button aria-label="锁定三维视图"><svg><use href="#v-lock"/></svg></button>
      <button aria-label="临时隐藏"><svg><use href="#v-glass"/></svg></button>
      <button aria-label="显示隐藏图元"><svg><use href="#v-bulb"/></svg></button>
      <button aria-label="临时视图属性"><svg><use href="#v-temp"/></svg></button>
      <button aria-label="分析模型"><svg><use href="#v-ana"/></svg></button>
      <button aria-label="位移集"><svg><use href="#v-disp"/></svg></button>
      <button aria-label="约束"><svg><use href="#v-con"/></svg></button>
      <button aria-label="向左滚动"><svg><use href="#s-left"/></svg></button>
      <div class="hbar"><i></i></div>
      <button aria-label="向右滚动"><svg><use href="#s-right"/></svg></button>
    </div>
  </section>

  <aside class="browser">
    <div class="panelhead"><h2>项目浏览器 - 项目1</h2><button aria-label="关闭项目浏览器"><svg><use href="#s-x"/></svg></button></div>
    <div class="treewrap">
      <svg class="lines" viewBox="0 0 120 214" aria-hidden="true"><path d="M6 6V197M17 12V141M28 22V52M28 78V85M6 6h6M17 17h8M28 28h6M28 40h6M28 51h6M17 62h8M17 73h8M28 84h6M17 96h8M17 107h8M17 118h8M17 129h8M17 141h8M6 152h6M6 163h6M6 174h6M6 185h6M6 197h6M6 208h6"/></svg>
      <ul class="tree">
        <li class="l0"><svg><use href="#b-minus"/></svg><svg class="ic"><use href="#b-root"/></svg>视图 (全部)</li>
        <li class="l1"><svg><use href="#b-minus"/></svg>楼层平面</li>
        <li class="l2"><svg class="ic"><use href="#b-view"/></svg>场地</li>
        <li class="l2"><svg class="ic"><use href="#b-view"/></svg>标高 1</li>
        <li class="l2"><svg class="ic"><use href="#b-view"/></svg>标高 2</li>
        <li class="l1"><svg><use href="#b-plus"/></svg>天花板平面</li>
        <li class="l1"><svg><use href="#b-minus"/></svg>三维视图</li>
        <li class="l2"><svg class="ic"><use href="#b-view"/></svg><strong>{3D}</strong></li>
        <li class="l1"><svg><use href="#b-plus"/></svg>立面 (建筑立面)</li>
        <li class="l1"><svg><use href="#b-plus"/></svg>面积平面 (人防分区面积)</li>
        <li class="l1"><svg><use href="#b-plus"/></svg>面积平面 (净面积)</li>
        <li class="l1"><svg><use href="#b-plus"/></svg>面积平面 (总建筑面积)</li>
        <li class="l1"><svg><use href="#b-plus"/></svg>面积平面 (防火分区面积)</li>
        <li class="l0 leaf"><svg class="ic"><use href="#b-legend"/></svg>图例</li>
        <li class="l0"><svg><use href="#b-plus"/></svg><svg class="ic"><use href="#b-sched"/></svg>明细表/数量 (全部)</li>
        <li class="l0 leaf"><svg class="ic"><use href="#b-sheet"/></svg>图纸 (全部)</li>
        <li class="l0"><svg><use href="#b-plus"/></svg><svg class="ic"><use href="#b-fam"/></svg>族</li>
        <li class="l0"><svg><use href="#b-plus"/></svg><svg class="ic"><use href="#b-grp"/></svg>组</li>
        <li class="l0 leaf"><svg class="ic"><use href="#b-link"/></svg>Revit 链接</li>
      </ul>
    </div>
  </aside>
</main>

<footer class="status">
  <p>单击可进行选择; 按 Tab 键并单击可选择其他项目; 按 Ctrl 键并单击可将新项目添加到选择集; 按 Shift 键并单击可取消选择。</p>
  <div class="sets">
    <svg><use href="#t-work"/></svg>
    <span class="pick"><select aria-label="工作集"><option></option></select><svg><use href="#s-down"/></svg></span>
    <svg><use href="#t-pen"/></svg><span class="count">:0</span>
    <svg class="opt"><use href="#t-opt"/></svg><svg><use href="#t-list"/></svg>
    <span class="pick"><select aria-label="设计选项"><option>主模型</option></select><svg><use href="#s-down"/></svg></span>
  </div>
  <div class="filters">
    <button aria-label="选择链接"><svg><use href="#t-sel"/></svg></button>
    <button aria-label="选择基线图元"><svg><use href="#t-under"/></svg></button>
    <button aria-label="选择锁定图元"><svg><use href="#t-pin"/></svg></button>
    <button aria-label="按面选择图元"><svg><use href="#t-face"/></svg></button>
    <button aria-label="选择时拖拽图元"><svg><use href="#t-drag"/></svg></button>
    <button aria-label="后台进程"><svg><use href="#t-ring"/></svg></button>
    <button aria-label="过滤器"><svg><use href="#t-filter"/></svg>:0</button>
  </div>
</footer>
</body>
</html>
```

FILE: styles.css
```css
* { box-sizing: border-box; }
body {
  margin: 0;
  min-height: 100vh;
  padding-bottom: 20px;
  display: flex;
  flex-direction: column;
  background: #fff;
  color: #2a2a2a;
  font: 7px/10px "Noto Sans", "Noto Sans CJK SC", sans-serif;
}
button, select, input { font: inherit; color: inherit; margin: 0; padding: 0; }
button { border: 0; background: none; white-space: nowrap; }
svg { display: block; flex: none; width: 11px; height: 11px; }
h1, h2, p, ul { margin: 0; padding: 0; font-size: inherit; font-weight: inherit; list-style: none; }
.defs { position: absolute; width: 0; height: 0; }

/* title bar */
.titlebar { display: flex; height: 14px; background: #cbcbcb; }
.quick, .account { display: flex; align-items: center; flex: none; }
.quick { padding-left: 2px; }
.titlebar button { display: flex; align-items: center; justify-content: center; height: 13px; }
.titlebar .logo { width: 11px; height: 12px; background: #1b5fa9; color: #fff; font-weight: 700; font-size: 8px; }
.w4 { width: 4px; }
.w6 { width: 6px; }
.w8 { width: 8px; }
.w12 { width: 12px; }
.w13 { width: 13px; }
.w14 { width: 14px; }
.w16 { width: 16px; }
.w17 { width: 17px; }
.w22 { width: 22px; }
.w4 svg, .w6 svg, .small svg { width: 6px; height: 6px; }
.account .w8 svg { width: 8px; height: 8px; }
.titlebar .on { background: #a9d3f2; outline: 1px solid #4b9bd4; outline-offset: -1px; }
.caption { flex: 1; text-align: center; line-height: 11px; white-space: nowrap; color: #444; }
.login { margin-right: 32px; }
.last { margin-right: 27px; }

/* ribbon tabs */
.tabs { display: flex; height: 14px; background: #cbcbcb; }
.tab { min-width: 20px; padding: 2px 5px 0; line-height: 12px; color: #333; }
.tab:nth-child(odd) { margin-right: 1px; }
.file { width: 25px; background: #256fa9; color: #fff; }
.current { background: #f0f0f0; }
.state { margin-left: 12px; padding-top: 1px; }
.state svg { width: 16px; height: 12px; }

/* ribbon */
.ribbon { display: flex; height: 54px; background: #f0f0f0; border-bottom: 1px solid #cfcfcf; }
.group { display: flex; flex-direction: column; padding-right: 1px; }
.group.ruled { border-left: 1px solid #ddd; padding-right: 2px; }
.build { padding: 0 5px 0 1px; border-right: 1px solid #ddd; }
.select { padding: 0 2px 0 3px; border-right: 1px solid #ddd; }
.tools { display: flex; height: 42px; flex: none; }
.tool { position: relative; display: flex; flex-direction: column; align-items: center; width: 22px; padding-top: 2px; text-align: center; }
.tool svg { width: 19px; height: 19px; margin-bottom: 1px; }
.tool.slim { width: 20px; }
.tool.mid { width: 24px; }
.tool.wide { width: 26px; }
.tool.widest { width: 32px; }
.tool:disabled { opacity: .35; }
.active { background: #9ccbef; outline: 1px solid #6aa9d8; outline-offset: -1px; color: #245c84; }
.drop::after, .side::after, .more::after { content: ""; border: 2px solid transparent; border-top-color: #333; border-bottom: 0; }
.side::after { position: absolute; right: -1px; top: 30px; border-width: 1px; border-top-width: 2px; }
.name { height: 11px; line-height: 11px; text-align: center; color: #444; }
.more { display: flex; align-items: center; justify-content: center; gap: 4px; }
.optionbar { height: 15px; background: #efefef; border-bottom: 1px solid #ccc; }

/* shared panel parts */
.work { flex: 1; display: flex; min-height: 0; }
.panelhead { display: flex; align-items: center; justify-content: space-between; height: 12px; padding: 0 1px 0 2px; background: #f0f0f0; flex: none; }
.panelhead svg { width: 9px; height: 9px; }
.pick { position: relative; display: block; }
.pick select { width: 100%; height: 100%; appearance: none; border: 0; background: none; padding-left: 2px; border-radius: 0; }
.pick svg { position: absolute; right: 2px; top: 2px; width: 7px; height: 7px; pointer-events: none; opacity: .7; }
.vbar { display: flex; flex-direction: column; align-items: center; width: 10px; background: #f0f0f0; }
.vbar svg { width: 8px; height: 11px; }
.vbar i { width: 8px; background: #cdcdcd; }
.vbar b { flex: 1; }
.vbar .long { flex: 11; }
.vbar .stub { height: 10px; }

/* properties */
.props { display: flex; flex-direction: column; width: 124px; background: #f0f0f0; border-right: 2px solid #ccc; flex: none; }
.family { display: flex; align-items: center; height: 39px; background: #f3f3f3; border-bottom: 1px solid #d6d6d6; }
.thumb { display: flex; align-items: center; justify-content: center; width: 40px; height: 37px; background: #fafafa; border-right: 1px solid #ddd; }
.thumb svg { width: 20px; height: 20px; }
.fname { flex: 1; padding-left: 2px; }
.family button svg { width: 8px; height: 8px; }
.typerow { display: flex; align-items: center; justify-content: space-between; height: 16px; padding: 0 4px 0 1px; }
.typerow .pick { width: 74px; height: 13px; border: 1px solid #bbb; background: #e6e6e6; }
.edittype { display: flex; align-items: center; gap: 2px; }
.listwrap { flex: 1; display: flex; min-height: 0; }
.grid { flex: 1; display: flex; flex-direction: column; background: #fff; }
.grid tbody { flex: 1; display: flex; flex-direction: column; }
.grid tr { flex: 1 0 11px; display: flex; align-items: stretch; border-bottom: 1px dashed #d0d0d0; min-height: 0; line-height: 11px; }
.grid th { width: 53px; padding: 0 0 0 6px; text-align: left; font-weight: 400; white-space: nowrap; flex: none; }
.grid td { flex: 1; display: flex; align-items: center; padding: 0 7px 0 1px; border-left: 1px dashed #d0d0d0; white-space: nowrap; }
.grid .sec { background: #dcdcdc; border-bottom-color: #dcdcdc; }
.grid .sec th { flex: 1; padding-left: 1px; }
.grid .sec td { flex: none; border: 0; padding: 0 1px; }
.grid .sec svg { width: 8px; height: 8px; }
.grid .off { color: #8c8c8c; }
.grid button { width: 100%; height: 10px; line-height: 8px; background: #e2e2e2; border: 1px solid #b4b4b4; }
.grid input[type="text"] { width: 100%; height: 11px; border: 1px solid #333; padding-left: 3px; background: #fff; }
.grid input[type="checkbox"] { appearance: none; width: 8px; height: 8px; margin-left: 1px; border: 1px solid #666; background: #fff; }
.grid input[type="checkbox"]:disabled { border-color: #ddd; }
.propfoot { display: flex; justify-content: space-between; align-items: center; height: 14px; padding-left: 2px; }
.propfoot a { color: #1a73b8; }
.propfoot button { width: 42px; height: 12px; background: #c8c8c8; color: #8c8c8c; }

/* view area */
.center { flex: 1; display: flex; flex-direction: column; min-width: 0; }
.viewtabs { display: flex; height: 12px; background: #c9c9c9; flex: none; }
.vtab { display: flex; align-items: center; gap: 4px; width: 72px; padding: 0 2px; background: #c4c4c4; color: #555; }
.vtab svg { width: 10px; height: 10px; }
.vtab strong { flex: 1; text-align: left; }
.front { background: #fff; color: #222; }
.tablist { margin-left: auto; }
.viewport { flex: 1; display: flex; min-height: 0; }
.canvas { position: relative; flex: 1; min-width: 0; background: #fff; }
.model { width: 100%; height: 100%; }
.solid { fill: #7d7d7d; stroke: #333; stroke-width: .6; }
.edge { fill: none; stroke: #2a2a2a; stroke-width: 2.2; }
.railing { fill: none; stroke: #444; stroke-width: 2; }
.shine { fill: none; stroke: #858585; stroke-width: .8; }
.posts { fill: none; stroke: #222; stroke-width: 1.4; }
.viewcube { position: absolute; right: 11px; top: 29px; width: 77px; height: 62px; }
.navbar { position: absolute; right: 0; top: 97px; width: 20px; height: 66px; display: flex; flex-direction: column; align-items: center; justify-content: space-between; padding: 1px; background: #f4f4f4; border: 1px solid #ccc; border-radius: 3px; }
.navbar button svg { width: 14px; height: 14px; }
.navbar .tiny { width: 5px; height: 5px; opacity: .6; }
.navbar hr { width: 100%; margin: 0; border: 0; border-top: 1px solid #ddd; }
.dot { align-self: flex-end; width: 4px; height: 4px; border: 1px solid #aaa; border-radius: 50%; }
.plain svg { opacity: .8; }
.viewctl { display: flex; align-items: center; height: 12px; background: #f1f1f1; flex: none; padding: 0 10px 0 12px; }
.viewctl button { width: 12px; }
.viewctl .scale { width: 32px; text-align: left; }
.viewctl svg { width: 10px; height: 10px; }
.hbar { flex: 1; display: flex; justify-content: center; height: 100%; }
.hbar i { width: 10px; height: 11px; background: #cdcdcd; }

/* project browser */
.browser { width: 121px; background: #fff; border-left: 2px solid #ccc; flex: none; }
.treewrap { position: relative; }
.lines { position: absolute; left: 0; top: 0; width: 120px; height: 214px; fill: none; stroke: #ccc; stroke-width: 1; stroke-dasharray: 1 1; }
.tree { position: relative; display: grid; grid-auto-rows: 1fr; min-height: 214px; }
.tree li { display: flex; align-items: center; white-space: nowrap; }
.tree svg { width: 7px; height: 7px; margin-right: 2px; }
.tree .ic { width: 10px; height: 10px; margin-right: 3px; }
.l0 { padding-left: 2px; }
.leaf { padding-left: 11px; }
.l1 { padding-left: 13px; }
.tree .l1 svg { margin-right: 5px; }
.l2 { padding-left: 33px; }
.tree strong { background: #e4e4e4; padding: 0 1px; }

/* status bar */
.status { display: flex; align-items: center; height: 16px; background: #c9c9c9; white-space: nowrap; }
.status p { flex: 0 0 49%; padding-left: 1px; }
.sets { display: flex; align-items: center; flex: 1; gap: 3px; }
.sets .pick { width: 115px; height: 11px; background: #fff; color: #777; }
.sets .pick svg { opacity: .5; }
.count { width: 12px; }
.opt { margin-left: 4px; }
.filters { display: flex; align-items: center; padding-right: 39px; gap: 4px; }
.filters button { display: flex; align-items: center; }
```
